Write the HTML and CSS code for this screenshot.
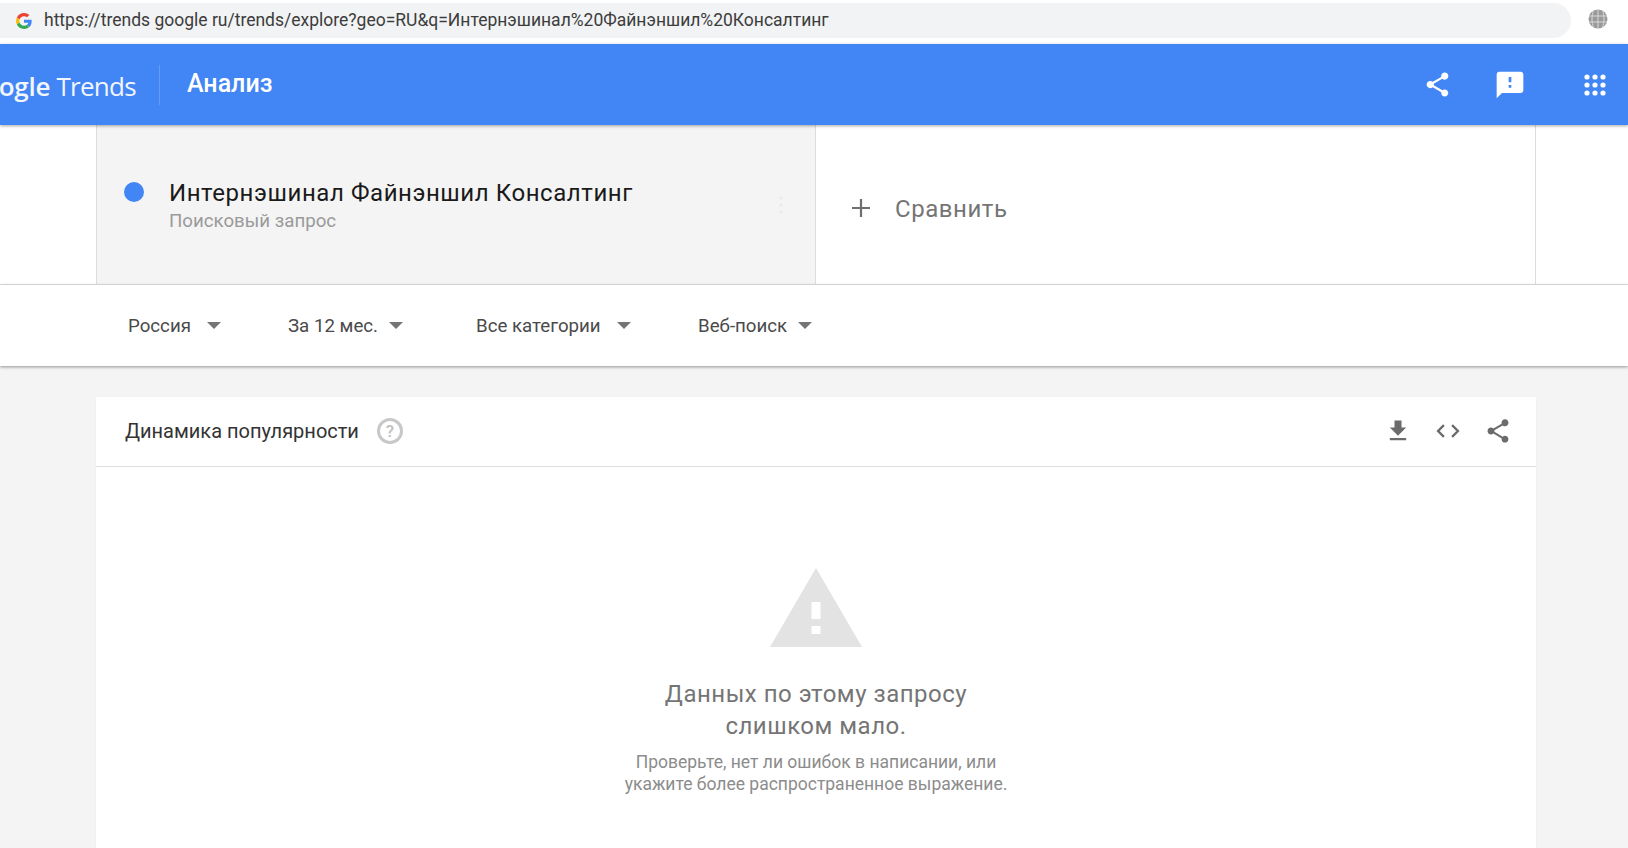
FILE: index.html
```html
<!DOCTYPE html>
<html lang="ru">
<head>
<meta charset="utf-8">
<title>Google Trends</title>
<link rel="stylesheet" href="styles.css">
</head>
<body>
<div class="chrome">
  <div class="address">
    <svg class="g-icon" viewBox="0 0 48 48" width="16" height="16"><path fill="#EA4335" d="M24 9.5c3.5 0 6.700 1.200 9.200 3.600l6.900-6.900C35.900 2.400 30.500 0 24 0 14.600 0 6.500 5.400 2.600 13.200l8 6.200C12.400 13.700 17.700 9.500 24 9.500z"/><path fill="#4285F4" d="M47 24.500c0-1.600-.1-3.100-.4-4.500H24v9h12.900c-.6 3-2.200 5.500-4.700 7.200l7.700 6C44.400 38.100 47 31.900 47 24.500z"/><path fill="#FBBC05" d="M10.600 28.600c-.5-1.400-.8-3-.8-4.600s.3-3.200.8-4.600l-8-6.200C.9 16.500 0 20.100 0 24s.9 7.500 2.600 10.800l8-6.200z"/><path fill="#34A853" d="M24 48c6.500 0 11.900-2.100 15.900-5.800l-7.700-6c-2.200 1.400-4.900 2.300-8.200 2.300-6.300 0-11.600-4.200-13.400-9.900l-8 6.200C6.500 42.600 14.600 48 24 48z"/></svg>
    <span class="url">https://trends google ru/trends/explore?geo=RU&amp;q=Интернэшинал%20Файнэншил%20Консалтинг</span>
  </div>
  <svg class="globe" viewBox="0 0 20 20" width="20" height="20"><circle cx="10" cy="10" r="9.500" fill="#9a9a9a"/><path d="M1 7h18M1 13h18M10 0v20M5.500 1.500c-2 5-2 12 0 17M14.500 1.500c2 5 2 12 0 17" stroke="#d8d8d8" stroke-width="1" fill="none"/></svg>
</div>

<header class="appbar">
  <div class="logo"><span class="logo-text"><span class="logo-google">ogle</span> Trends</span></div>
  <div class="divider"></div>
  <div class="page-title">Анализ</div>
  <div class="app-actions">
    <svg class="share-white" viewBox="0 0 24 24" width="29" height="29"><path fill="#fff" d="M18 16.080c-.76 0-1.440.3-1.960.77L8.910 12.700c.05-.23.09-.46.09-.7s-.04-.47-.09-.7l7.050-4.110c.54.5 1.250.81 2.040.81 1.660 0 3-1.340 3-3s-1.340-3-3-3-3 1.340-3 3c0 .24.04.47.09.7L8.040 9.810C7.500 9.310 6.790 9 6 9c-1.660 0-3 1.340-3 3s1.340 3 3 3c.79 0 1.500-.31 2.040-.81l7.120 4.160c-.05.21-.08.43-.08.65 0 1.610 1.310 2.920 2.920 2.920s2.920-1.310 2.920-2.920-1.310-2.920-2.920-2.920z"/></svg>
    <svg class="feedback" viewBox="0 0 24 24" width="32" height="32"><path fill="#fff" d="M20 2H4c-1.100 0-2 .9-2 2v18l4-4h14c1.100 0 2-.9 2-2V4c0-1.100-.9-2-2-2zm-7 12h-2v-2h2v2zm0-4h-2V6h2v4z"/></svg>
    <svg class="apps" viewBox="0 0 22 22" width="22" height="22" fill="#fff"><circle cx="3" cy="3" r="2.600"/><circle cx="11" cy="3" r="2.600"/><circle cx="19" cy="3" r="2.600"/><circle cx="3" cy="11" r="2.600"/><circle cx="11" cy="11" r="2.600"/><circle cx="19" cy="11" r="2.600"/><circle cx="3" cy="19" r="2.600"/><circle cx="11" cy="19" r="2.600"/><circle cx="19" cy="19" r="2.600"/></svg>
  </div>
</header>

<section class="compare">
  <div class="term">
    <span class="dot"></span>
    <div class="term-text">
      <div class="term-name">Интернэшинал Файнэншил Консалтинг</div>
      <div class="term-sub">Поисковый запрос</div>
    </div>
    <svg class="kebab" viewBox="0 0 4 20" width="4" height="20"><circle cx="2" cy="3" r="1.800" fill="#ebebeb"/><circle cx="2" cy="10" r="1.800" fill="#ebebeb"/><circle cx="2" cy="17" r="1.800" fill="#ebebeb"/></svg>
  </div>
  <div class="add">
    <svg class="plus" viewBox="0 0 18 18" width="18" height="18"><path d="M9 0v18M0 9h18" stroke="#6f6f6f" stroke-width="2.200" fill="none"/></svg>
    <span class="add-label">Сравнить</span>
  </div>
</section>

<nav class="filters">
  <div class="filter f-geo"><span>Россия</span><i class="caret"></i></div>
  <div class="filter f-time"><span>За 12 мес.</span><i class="caret"></i></div>
  <div class="filter f-cat"><span>Все категории</span><i class="caret"></i></div>
  <div class="filter f-prop"><span>Веб-поиск</span><i class="caret"></i></div>
</nav>

<main class="content">
  <article class="card">
    <div class="card-head">
      <h2 class="card-title">Динамика популярности</h2>
      <span class="help">?</span>
      <div class="card-actions">
        <svg viewBox="0 0 24 24" width="28" height="28"><path fill="#6b6b6b" d="M19 9h-4V3H9v6H5l7 7 7-7zM5 18v2h14v-2H5z"/></svg>
        <svg viewBox="0 0 24 24" width="28" height="28"><path d="M8.500 7 3.500 12l5 5M15.500 7l5 5-5 5" stroke="#6b6b6b" stroke-width="2" fill="none"/></svg>
        <svg viewBox="0 0 24 24" width="28" height="28"><path fill="#6b6b6b" d="M18 16.080c-.76 0-1.440.3-1.960.77L8.910 12.700c.05-.23.09-.46.09-.7s-.04-.47-.09-.7l7.050-4.110c.54.5 1.250.81 2.040.81 1.660 0 3-1.340 3-3s-1.340-3-3-3-3 1.340-3 3c0 .24.04.47.09.7L8.040 9.810C7.500 9.310 6.790 9 6 9c-1.660 0-3 1.340-3 3s1.340 3 3 3c.79 0 1.500-.31 2.040-.81l7.120 4.160c-.05.21-.08.43-.08.65 0 1.610 1.310 2.920 2.920 2.920s2.920-1.310 2.920-2.920-1.310-2.920-2.920-2.920z"/></svg>
      </div>
    </div>
    <div class="empty">
      <svg class="warn" viewBox="0 0 92 79" width="92" height="79"><path fill="#e3e3e3" d="M46 0 92 79H0z"/><rect x="41.500" y="34" width="9" height="17" fill="#fff"/><rect x="41.500" y="58" width="9" height="8" fill="#fff"/></svg>
      <p class="empty-title">Данных по этому запросу<br>слишком мало.</p>
      <p class="empty-desc">Проверьте, нет ли ошибок в написании, или<br>укажите более распространенное выражение.</p>
    </div>
  </article>
</main>
</body>
</html>
```

FILE: styles.css
```css
* { box-sizing: border-box; }
html, body { margin: 0; height: 848px; overflow: hidden; }
body { background: #f4f4f4; font-family: Roboto, "Liberation Sans", sans-serif; }

.chrome { height: 44px; background: #fff; display: flex; align-items: flex-start; padding-top: 3px; }
.address { width: 1571px; height: 35px; background: #f1f3f4; border-radius: 0 18px 18px 0; display: flex; align-items: center; padding-left: 16px; }
.g-icon { flex: none; }
.url { margin: 0 0 1px 12px; font-size: 17.500px; color: #3c3c3c; white-space: nowrap; }
.globe { margin: 6px 0 0 17px; }

.appbar { height: 81px; background: #4285f4; display: flex; align-items: center; box-shadow: 0 1px 3px rgba(0,0,0,.35); position: relative; z-index: 2; color: #fff; }
.logo { width: 136px; display: flex; justify-content: flex-end; flex: none; }
.logo-text { font-family: "Open Sans", sans-serif; font-size: 26px; letter-spacing: -.7px; white-space: nowrap; color: #f2f6ff; line-height: 34px; margin-top: 2px; }
.logo-google { font-weight: 600; letter-spacing: -.2px; }
.divider { width: 1px; height: 40px; margin-left: 23px; background: rgba(255,255,255,.18); }
.page-title { margin-left: 27px; font-size: 25px; font-weight: 500; margin-top: -2px; }
.app-actions { margin-left: auto; display: flex; align-items: center; padding-right: 22px; }
.feedback { margin-left: 42px; margin-top: 1px; }
.apps { margin-left: 58px; }

.compare { height: 160px; background: #fff; display: flex; padding: 0 92px 0 96px; border-bottom: 1px solid #e2e2e2; }
.term { width: 720px; background: #f4f4f4; border-left: 1px solid #dcdcdc; border-right: 1px solid #dcdcdc; display: flex; align-items: flex-start; padding: 54px 0 0 27px; position: relative; }
.dot { width: 20px; height: 20px; border-radius: 50%; background: #4285f4; flex: none; margin-top: 3px; }
.term-text { margin-left: 25px; }
.term-name { font-size: 24px; line-height: 28px; color: #1a1a1a; white-space: nowrap; letter-spacing: 0.57px; }
.term-sub { font-size: 18.700px; line-height: 21px; margin-top: 4px; color: #9a9a9a; white-space: nowrap; }
.kebab { position: absolute; right: 32px; top: 70px; }
.add { flex: 1; border-right: 1px solid #dcdcdc; display: flex; align-items: flex-start; padding: 69px 0 0 36px; }
.plus { flex: none; margin-top: 5px; }
.add-label { margin-left: 25px; font-size: 24px; font-weight: 400; color: #757575; line-height: 30px; letter-spacing: 0.55px; }

.filters { height: 81px; background: #fff; box-shadow: 0 1px 3px rgba(0,0,0,.4); display: flex; align-items: center; padding: 1px 0 0 128px; position: relative; }
.filter { display: flex; align-items: center; font-size: 18.700px; color: #4a4a4a; white-space: nowrap; }
.caret { width: 0; height: 0; border-left: 7px solid transparent; border-right: 7px solid transparent; border-top: 7px solid #757575; margin-top: -2px; }
.f-geo { width: 160px; } .f-geo .caret { margin-left: 16px; }
.f-time { width: 188px; } .f-time .caret { margin-left: 11px; }
.f-cat { width: 222px; } .f-cat .caret { margin-left: 16px; }
.f-prop .caret { margin-left: 11px; }

.content { padding: 31px 92px 0 96px; }
.card { background: #fff; box-shadow: 0 0 1px rgba(0,0,0,.08); height: 451px; }
.card-head { height: 70px; border-bottom: 1px solid #dedede; display: flex; align-items: center; padding: 0 24px 1px 29px; }
.card-title { margin: 0; font-size: 20px; font-weight: 400; color: #333; white-space: nowrap; }
.help { margin-left: 18px; width: 26px; height: 26px; border: 3px solid #c8c8c8; border-radius: 50%; color: #c0c0c0; font-size: 17px; font-weight: 500; display: flex; align-items: center; justify-content: center; }
.card-actions { margin-left: auto; display: flex; gap: 22px; }
.empty { display: flex; flex-direction: column; align-items: center; padding-top: 101px; }
.warn { display: block; }
.empty-title { margin: 31px 0 0; font-size: 24px; line-height: 32px; color: #757575; text-align: center; letter-spacing: 0.5px; }
.empty-desc { margin: 9px 0 0; font-size: 17.500px; line-height: 22px; color: #8c8c8c; text-align: center; }
```
